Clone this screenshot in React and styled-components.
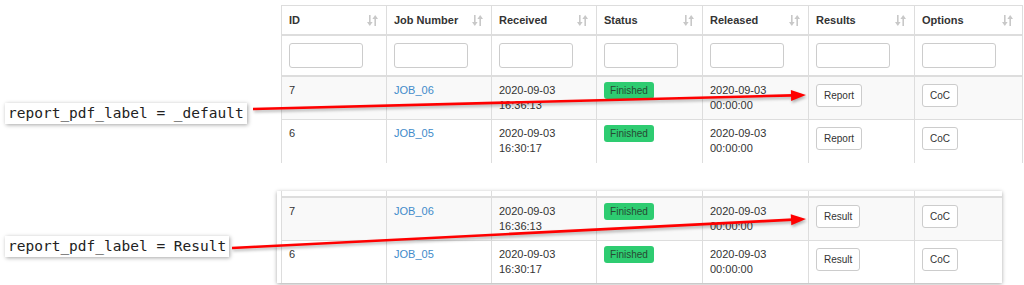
import React from 'react'
import styled, { createGlobalStyle } from 'styled-components'

const GlobalStyle = createGlobalStyle`
  html, body {
    margin: 0;
    padding: 0;
    background: #fff;
  }
  body {
    font-family: "Liberation Sans", Arial, sans-serif;
    color: #333;
  }
`

const COLS = '105px 105px 105px 106px 106px 106px 107px'

const Page = styled.div`
  position: relative;
  width: 1024px;
  height: 285px;
  overflow: hidden;
`

const Section = styled.div`
  display: flex;
  align-items: flex-start;
  margin-top: ${({ top }) => top}px;
`

const LabelSlot = styled.div`
  width: ${({ w }) => w}px;
  flex: none;
  box-sizing: border-box;
  padding: ${({ pt }) => pt}px 0 0 5px;
`

const Label = styled.div`
  display: inline-block;
  background: #fff;
  padding: 0 3px;
  font-family: "DejaVu Sans Mono", "Liberation Mono", monospace;
  font-size: 14.5px;
  line-height: 21px;
  color: #222;
  box-shadow: 1px 1px 4px rgba(0, 0, 0, 0.35);
`

const Table = styled.div`
  width: 741px;
  flex: none;
  border-top: ${({ bare }) => (bare ? 'none' : '1px solid #ddd')};
  border-right: 1px solid #ddd;
  font-size: 11px;
`

const Row = styled.div`
  display: grid;
  grid-template-columns: ${COLS};
  background: ${({ striped }) => (striped ? '#f9f9f9' : '#fff')};
  border-bottom: ${({ line }) => line || 'none'};
`

const Cell = styled.div`
  border-left: 1px solid #ddd;
  box-sizing: border-box;
  padding: ${({ pad }) => pad || '6px 7px'};
  line-height: 15px;
  height: ${({ h }) => (h ? `${h}px` : 'auto')};
  min-width: 0;
`

const HeadCell = styled(Cell)`
  display: flex;
  align-items: center;
  justify-content: space-between;
  font-weight: bold;
  height: 28px;
  padding: 0 8px 0 7px;
`

const FilterInput = styled.div`
  width: 74px;
  height: 25px;
  box-sizing: border-box;
  border: 1px solid #ccc;
  border-radius: 3px;
  background: #fff;
`

const JobLink = styled.span`
  color: #428bca;
`

const Badge = styled.span`
  display: inline-block;
  margin-top: -2px;
  width: 50px;
  height: 17px;
  line-height: 17px;
  text-align: center;
  border-radius: 3px;
  background: #2ecc71;
  color: #274a33;
  font-size: 10px;
`

const Button = styled.span`
  display: inline-block;
  margin-top: 1px;
  height: 23px;
  line-height: 21px;
  padding: 0 7px;
  box-sizing: border-box;
  border: 1px solid #ccc;
  border-radius: 3px;
  background: #fff;
  color: #333;
  font-size: 10px;
`

const Snapshot = styled.div`
  width: 725px;
  height: 92px;
  flex: none;
  box-sizing: border-box;
  padding-left: 4px;
  overflow: hidden;
  background: #fff;
  box-shadow: 0 1px 4px rgba(0, 0, 0, 0.35);
`

const Overlay = styled.svg`
  position: absolute;
  left: 0;
  top: 0;
  pointer-events: none;
  filter: drop-shadow(1px 2px 1.5px rgba(0, 0, 0, 0.3));
`

const SortIcon = () => (
  <svg width="11" height="11" viewBox="0 0 11 11">
    <g fill="#c8c8c8">
      <rect x="2" y="0" width="1.6" height="8" />
      <polygon points="0,7 5.6,7 2.8,11" />
      <rect x="7.4" y="3" width="1.6" height="8" />
      <polygon points="5.4,4 11,4 8.2,0" />
    </g>
  </svg>
)

const headers = ['ID', 'Job Number', 'Received', 'Status', 'Released', 'Results', 'Options']

const rows = [
  { id: 7, job: 'JOB_06', date: '2020-09-03', time: '16:36:13' },
  { id: 6, job: 'JOB_05', date: '2020-09-03', time: '16:30:17' }
]

const DataRows = ({ result }) =>
  rows.map((r, i) => (
    <Row key={r.id} striped={i === 0} line={i === 0 ? '1px solid #ddd' : null}>
      <Cell h={i === 0 ? 42 : 43}>{r.id}</Cell>
      <Cell><JobLink>{r.job}</JobLink></Cell>
      <Cell>{r.date}<br />{r.time}</Cell>
      <Cell><Badge>Finished</Badge></Cell>
      <Cell>2020-09-03<br />00:00:00</Cell>
      <Cell><Button>{result}</Button></Cell>
      <Cell><Button>CoC</Button></Cell>
    </Row>
  ))

const Arrow = ({ x1, y1, x2, y2 }) => {
  const dx = x2 - x1
  const dy = y2 - y1
  const len = Math.sqrt(dx * dx + dy * dy)
  const ux = dx / len
  const uy = dy / len
  const hl = 15
  const hw = 5.5
  const bx = x2 - ux * hl
  const by = y2 - uy * hl
  const pts = `${x2},${y2} ${bx - uy * hw},${by + ux * hw} ${bx + uy * hw},${by - ux * hw}`
  return (
    <g>
      <line x1={x1} y1={y1} x2={bx + ux * 2} y2={by + uy * 2} stroke="#f00" strokeWidth="2.6" />
      <polygon points={pts} fill="#f00" />
    </g>
  )
}

export default function App() {
  return (
    <Page>
      <GlobalStyle />
      <Section top={5}>
        <LabelSlot w={281} pt={98}>
          <Label>report_pdf_label = _default</Label>
        </LabelSlot>
        <Table>
          <Row line="2px solid #ddd">
            {headers.map(h => (
              <HeadCell key={h}>
                <span>{h}</span>
                <SortIcon />
              </HeadCell>
            ))}
          </Row>
          <Row line="2px solid #ddd">
            {headers.map(h => (
              <Cell key={h} pad="7px 7px">
                <FilterInput />
              </Cell>
            ))}
          </Row>
          <DataRows result="Report" />
        </Table>
      </Section>
      <Section top={28}>
        <LabelSlot w={277} pt={45}>
          <Label>report_pdf_label = Result</Label>
        </LabelSlot>
        <Snapshot>
          <Table bare>
            <Row line="2px solid #ddd">
              {headers.map(h => (
                <Cell key={h} h={5} pad="0" />
              ))}
            </Row>
            <DataRows result="Result" />
          </Table>
        </Snapshot>
      </Section>
      <Overlay width="1024" height="285">
        <Arrow x1={253} y1={109} x2={806} y2={95} />
        <Arrow x1={232} y1={248} x2={806} y2={219} />
      </Overlay>
    </Page>
  )
}
